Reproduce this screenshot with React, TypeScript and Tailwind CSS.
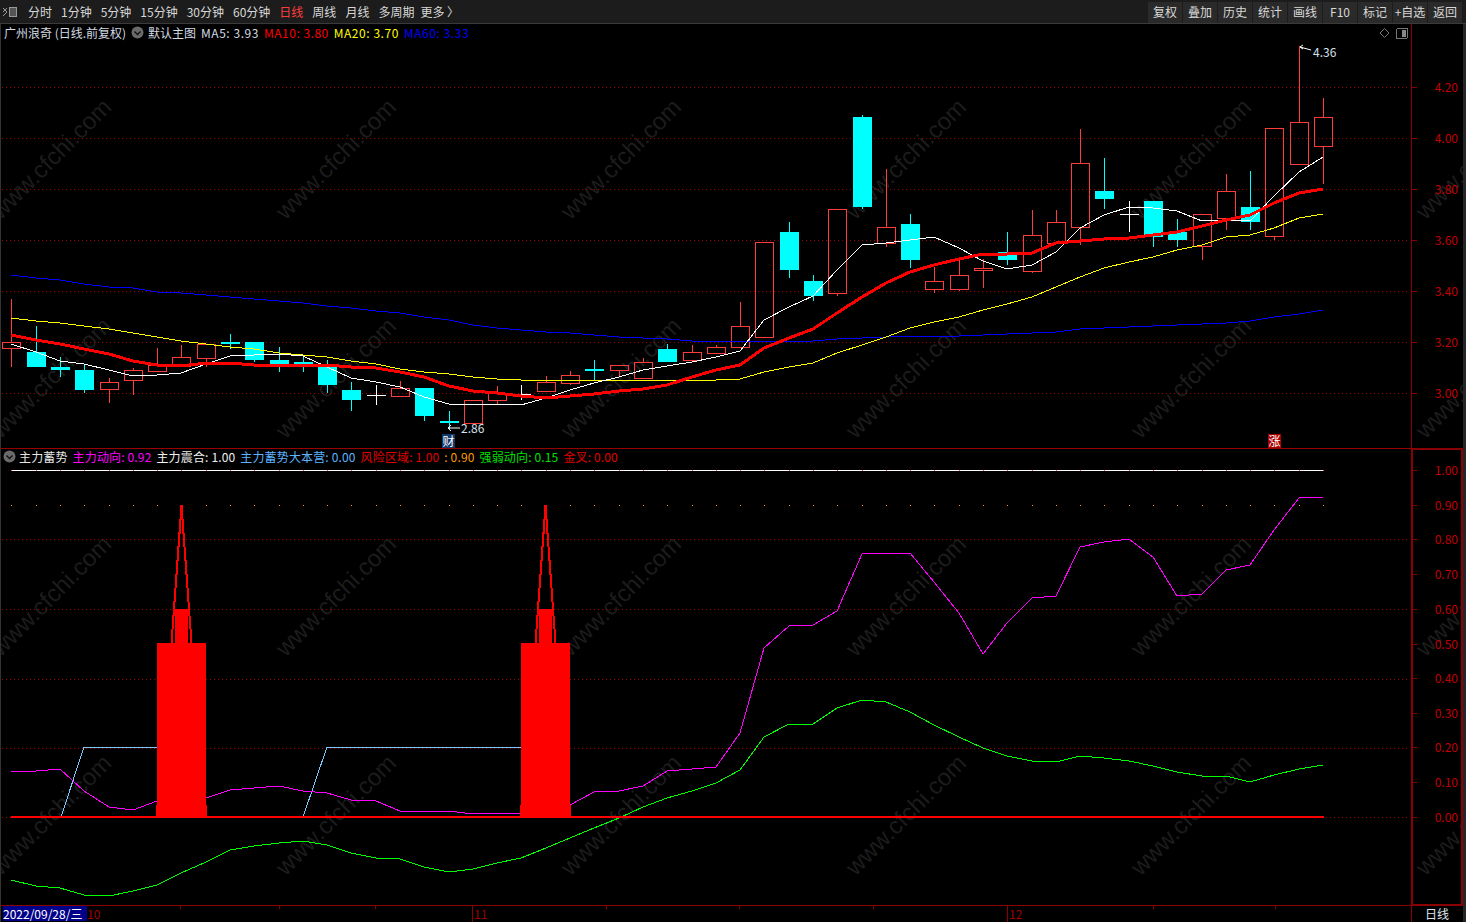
const X = (i: number) => Math.round(11.4 + 24.29 * i);
const pts = (ys: number[]) => ys.map((y, i) => `${X(i)},${y}`).join(' ');

// grid line as 1px dots every 4px, dash arrays get dropped unevenly once aliased
const dots = (y: number) => {
  let d = '';
  for (let x = 2; x < 1410; x += 4) d += `M${x} ${y}h1v1h-1z`;
  return d;
};

// hi, body top, body bottom, lo, kind (screen y, r = up, c = down, w = doji)
const candles: [number, number, number, number, string][] = [
  [299, 342, 348, 367, 'r'], [326, 352, 367, 367, 'c'], [357, 367, 370, 377, 'c'], [365, 370, 390, 393, 'c'],
  [378, 382, 389, 403, 'r'], [368, 370, 380, 395, 'r'], [348, 365, 371, 372, 'r'], [345, 357, 366, 366, 'r'],
  [344, 344, 358, 367, 'r'], [334, 342, 344, 349, 'c'], [342, 342, 360, 362, 'c'], [347, 360, 367, 372, 'c'],
  [357, 362, 367, 372, 'c'], [360, 367, 385, 393, 'c'], [382, 390, 400, 411, 'c'], [385, 395, 395, 405, 'w'],
  [381, 388, 396, 396, 'r'], [388, 388, 416, 421, 'c'], [411, 421, 423, 430, 'c'], [400, 400, 423, 423, 'r'],
  [386, 393, 400, 404, 'r'], [385, 394, 394, 400, 'w'], [376, 382, 391, 391, 'r'], [371, 375, 383, 385, 'r'],
  [360, 369, 371, 380, 'c'], [365, 365, 370, 377, 'r'], [358, 362, 378, 378, 'r'], [344, 349, 362, 362, 'c'],
  [345, 352, 360, 362, 'r'], [345, 347, 353, 353, 'r'], [302, 326, 347, 347, 'r'], [242, 242, 337, 337, 'r'],
  [222, 232, 270, 278, 'c'], [275, 281, 296, 301, 'c'], [209, 209, 293, 296, 'r'], [115, 117, 207, 209, 'c'],
  [169, 227, 243, 247, 'r'], [214, 224, 260, 268, 'c'], [267, 281, 289, 293, 'r'], [260, 275, 289, 291, 'r'],
  [259, 268, 270, 288, 'r'], [232, 252, 260, 265, 'c'], [210, 235, 271, 273, 'r'], [210, 222, 243, 243, 'r'],
  [129, 163, 227, 245, 'r'], [158, 191, 199, 209, 'c'], [201, 214, 214, 232, 'w'], [201, 201, 237, 247, 'c'],
  [219, 232, 240, 247, 'c'], [214, 214, 246, 260, 'r'], [174, 191, 218, 230, 'r'], [171, 207, 222, 230, 'c'],
  [128, 128, 236, 240, 'r'], [46, 122, 164, 164, 'r'], [98, 117, 146, 184, 'r'],
];

const ma5 = [344, 352, 361, 364, 370, 376, 375, 373, 364, 356, 355, 354, 356, 367, 378, 382, 387, 397, 404, 404, 404, 405, 398, 390, 383, 377, 370, 366, 362, 357, 351, 320, 307, 296, 270, 245, 243, 240, 237, 248, 261, 269, 265, 252, 228, 215, 207, 208, 211, 221, 220, 221, 196, 172, 157];
const ma10 = [335, 340, 344, 349, 354, 361, 365, 366, 363, 363, 365, 365, 365, 365, 367, 368, 372, 377, 386, 391, 393, 396, 398, 396, 394, 391, 389, 385, 377, 370, 365, 348, 338, 329, 313, 297, 283, 272, 265, 259, 254, 254, 253, 243, 241, 239, 238, 235, 232, 226, 220, 215, 203, 193, 189];
const ma20 = [318, 321, 323, 326, 329, 333, 337, 341, 344, 347, 349, 353, 355, 357, 361, 364, 369, 372, 374, 377, 379, 380, 381, 380, 380, 380, 380, 380, 380, 380, 379, 372, 367, 363, 353, 345, 337, 328, 322, 317, 310, 304, 297, 287, 277, 268, 262, 257, 250, 245, 237, 235, 228, 218, 214];
const ma60 = [275, 278, 280, 284, 287, 288, 292, 293, 295, 297, 299, 301, 303, 306, 308, 311, 313, 317, 320, 325, 328, 330, 332, 333, 335, 337, 338, 339, 341, 341, 341, 341, 341, 341, 339, 338, 337, 336, 336, 336, 335, 334, 333, 332, 329, 328, 327, 326, 325, 324, 323, 321, 317, 314, 310];

const force = [772, 771, 769, 791, 807, 810, 801, 800, 798, 790, 788, 786, 791, 793, 800, 801, 811, 811, 811, 814, 813, 813, 810, 805, 792, 791, 786, 771, 769, 767, 733, 648, 626, 625, 611, 554, 553, 553, 582, 613, 654, 623, 598, 596, 547, 542, 539, 557, 596, 594, 570, 565, 530, 498, 497];
const strength = [880, 886, 888, 895, 896, 891, 885, 873, 862, 850, 846, 843, 841, 845, 853, 858, 859, 867, 872, 869, 863, 858, 848, 838, 828, 818, 807, 798, 791, 783, 770, 737, 724, 724, 708, 700, 702, 712, 725, 737, 748, 756, 761, 762, 756, 758, 761, 766, 772, 776, 776, 782, 775, 769, 765];

const priceAxis = [['4.20', 87], ['4.00', 138], ['3.80', 189], ['3.60', 240], ['3.40', 291], ['3.20', 342], ['3.00', 393]] as const;
const indicatorAxis = [['1.00', 470], ['0.90', 505], ['0.80', 539], ['0.70', 574], ['0.60', 609], ['0.50', 644], ['0.40', 678], ['0.30', 713], ['0.20', 747], ['0.10', 782], ['0.00', 817]] as const;

const leftTabs = ['分时', '1分钟', '5分钟', '15分钟', '30分钟', '60分钟', '日线', '周线', '月线', '多周期'];
const rightTabs = ['复权', '叠加', '历史', '统计', '画线', 'F10', '标记', '+自选', '返回'];
const timeTicks = [180, 279, 375, 606, 739, 873, 1153, 1275];

function Candle({ c, i }: { c: (typeof candles)[number]; i: number }) {
  const [hi, top, bot, lo, kind] = c;
  const x = X(i);
  if (kind === 'c') {
    return (
      <g fill="#00ffff">
        <rect x={x} y={hi} width={1} height={lo - hi} />
        <rect x={x - 9} y={top} width={19} height={bot - top} />
      </g>
    );
  }
  if (kind === 'w') {
    return (
      <g fill="#ffffff">
        <rect x={x} y={hi} width={1} height={lo - hi} />
        <rect x={x - 9} y={top} width={19} height={1} />
      </g>
    );
  }
  return (
    <g>
      <rect x={x} y={hi} width={1} height={top - hi} fill="#ff3c3c" />
      <rect x={x} y={bot} width={1} height={lo - bot} fill="#ff3c3c" />
      <rect x={x - 8.5} y={top + 0.5} width={18} height={bot - top} fill="none" stroke="#ff3c3c" strokeWidth={1} />
    </g>
  );
}

function CircleChevron() {
  return (
    <svg width="13" height="13" viewBox="0 0 13 13" className="shrink-0">
      <circle cx="6.5" cy="6.5" r="6" fill="#6a6a6a" />
      <path d="M3.5 5.5 6.5 8.5 9.5 5.5" fill="none" stroke="#111" strokeWidth="1.4" />
    </svg>
  );
}

function AxisLabels({ items }: { items: readonly (readonly [string, number])[] }) {
  return (
    <>
      {items.map(([label, y]) => (
        <g key={label}>
          <rect x={1412} y={y} width={5} height={1} fill="#8b0000" />
          <text x={1458} y={y + 4.5} textAnchor="end" fill="#c00000" className="text-[12px]">
            {label}
          </text>
        </g>
      ))}
    </>
  );
}

function PricePanel() {
  return (
    <div className="relative h-[424px] shrink-0">
      <svg className="absolute inset-0" width="1466" height="424" viewBox="0 24 1466 424" shapeRendering="crispEdges">
        {priceAxis.map(([label, y]) => (
          <path key={label} d={dots(y)} fill="#a00000" />
        ))}
        {candles.map((c, i) => (
          <Candle key={i} c={c} i={i} />
        ))}
        <polyline points={pts(ma60)} fill="none" stroke="#0000ff" strokeWidth={1} />
        <polyline points={pts(ma20)} fill="none" stroke="#ffff00" strokeWidth={1} />
        <polyline points={pts(ma5)} fill="none" stroke="#ffffff" strokeWidth={1} />
        <polyline points={pts(ma10)} fill="none" stroke="#ff0000" strokeWidth={3} />
        <rect x={1411} y={24} width={1} height={424} fill="#8b0000" />
        <AxisLabels items={priceAxis} />
        {/* high / low markers */}
        <path d="M1303 45 1300 47 1303 49M1300 47 1311 50" fill="none" stroke="#fff" shapeRendering="auto" />
        <path d="M451 425 448 428 451 431M448 428H460" fill="none" stroke="#fff" shapeRendering="auto" />
        <text x={1313} y={57} fill="#d6e2ee" className="text-[12px]" shapeRendering="auto">4.36</text>
        <text x={461} y={433} fill="#d6e2ee" className="text-[12px]" shapeRendering="auto">2.86</text>
        <path d="M1384.5 28.5 1389 33 1384.5 37.5 1380 33Z" fill="none" stroke="#777" shapeRendering="auto" />
        <rect x={1396.5} y={28.5} width={11} height={10} rx={1.5} fill="none" stroke="#777" />
        <rect x={1402} y={30} width={4} height={7} fill="#888" />
      </svg>

      <div className="relative flex items-center gap-[5px] pl-[4px] h-[17px] text-[12px] leading-none text-[#d2dae2] whitespace-nowrap">
        <span className="w-[122px]">广州浪奇 (日线.前复权)</span>
        <CircleChevron />
        <span className="ml-[-1px]">默认主图</span>
        <span className="tracking-[0.55px]">MA5: 3.93</span>
        <span className="tracking-[0.5px] text-[#ff0000]">MA10: 3.80</span>
        <span className="tracking-[0.55px] text-[#ffff00]">MA20: 3.70</span>
        <span className="tracking-[0.55px] text-[#0000ff]">MA60: 3.33</span>
      </div>

      <div className="absolute left-[442px] top-[410px] w-[13px] h-[14px] bg-[#12386a] text-white text-[12px] leading-[14px] text-center">财</div>
      <div className="absolute left-[1268px] top-[410px] w-[13px] h-[14px] bg-[#a80000] text-white text-[12px] leading-[14px] text-center">涨</div>
    </div>
  );
}

function Spike({ left }: { left: number }) {
  const cx = left + 24.5;
  return (
    <g fill="#ff0000">
      <polygon points={`${cx - 1},505 ${cx + 1},505 ${cx + 11},643 ${cx + 9},643 ${cx},520 ${cx - 9},643 ${cx - 11},643`} />
      <rect x={left + 18} y={609} width={13} height={34} />
      <rect x={left} y={643} width={49} height={174} />
      <rect x={left - 1} y={805} width={51} height={12} />
    </g>
  );
}

function IndicatorPanel() {
  return (
    <div className="relative h-[457px] shrink-0">
      <svg className="absolute inset-0" width="1466" height="457" viewBox="0 448 1466 457" shapeRendering="crispEdges">
        {[539, 609, 679, 748, 817].map((y) => (
          <path key={y} d={dots(y)} fill="#a00000" />
        ))}
        <rect x={11} y={470} width={1313} height={1} fill="#ffffff" />
        {candles.map((_, i) => (
          <g key={i}>
            <rect x={X(i)} y={470} width={1} height={1} fill="#ff5050" />
            <rect x={X(i)} y={505} width={1} height={1} fill="#ff9a1e" />
          </g>
        ))}
        <polyline points={`${X(2) + 1},817 84,747 157,747`} fill="none" stroke="#7cc8ff" />
        <polyline points="303,817 327,747 521,747" fill="none" stroke="#7cc8ff" />
        <polyline points={pts(force)} fill="none" stroke="#ff00ff" />
        <polyline points={pts(strength)} fill="none" stroke="#00ff00" />
        <Spike left={157} />
        <Spike left={521} />
        <rect x={11} y={816} width={1313} height={2} fill="#ff0000" />
        <rect x={0} y={448} width={1463} height={1} fill="#990000" />
        <rect x={1411} y={448} width={52} height={2} fill="#8b0000" />
        <rect x={1411} y={449} width={2} height={456} fill="#8b0000" />
        <rect x={1461} y={449} width={2} height={456} fill="#8b0000" />
        <rect x={1411} y={904} width={52} height={1} fill="#8b0000" />
        <AxisLabels items={indicatorAxis} />
      </svg>

      <div className="relative flex items-center gap-[5px] pl-[3px] h-[17px] text-[12px] leading-none tracking-[0.15px] whitespace-nowrap">
        <CircleChevron />
        <span className="text-[#e6e6e6] ml-[-2px]">主力蓄势</span>
        <span className="text-[#ff00ff]">主力动向: 0.92</span>
        <span className="text-[#f0f0f0]">主力震合: 1.00</span>
        <span className="text-[#5db4ff]">主力蓄势大本营: 0.00</span>
        <span className="text-[#e00000]">
          风险区域: 1.00<span className="text-[#ff9a00] pl-[2px]"> : 0.90</span>
        </span>
        <span className="text-[#00e000]">强弱动向: 0.15</span>
        <span className="text-[#e00000]">金叉: 0.00</span>
      </div>
    </div>
  );
}

function TimeBar() {
  return (
    <div className="relative flex items-start h-[17px] border-t border-[#8b0000] text-[12px] leading-[15px] text-[#a00000]">
      <div className="ml-[3px] w-[84px] h-[15px] bg-[#000088] text-white whitespace-nowrap">2022/09/28/三</div>
      <span>10</span>
      {timeTicks.map((x) => (
        <span key={x} className="absolute top-0 w-px h-[3px] bg-[#8b0000]" style={{ left: x }} />
      ))}
      <span className="absolute left-[472px] top-0 h-[16px] border-l border-[#8b0000] pl-px">11</span>
      <span className="absolute left-[1007px] top-0 h-[16px] border-l border-[#8b0000] pl-px">12</span>
      <span className="absolute left-[1411px] top-0 h-[16px] w-[51px] border-l border-[#8b0000] text-center text-[#dfe6ee]">日线</span>
    </div>
  );
}

export default function App() {
  return (
    <div className="relative w-[1466px] h-[922px] overflow-hidden bg-black font-['Noto_Sans_CJK_SC','Liberation_Sans',sans-serif]">
      {/* watermark sits under everything */}
      <svg className="absolute inset-0" width="1466" height="922">
        {[159, 378, 596, 815].map((cy) =>
          [51, 336, 621, 906, 1191, 1476].map((cx) => (
            <text
              key={`${cx}-${cy}`}
              x={cx}
              y={cy + 8}
              textAnchor="middle"
              transform={`rotate(-45 ${cx} ${cy})`}
              fill="#1c1c1c"
              className="text-[24px] font-['Liberation_Sans',sans-serif]"
            >
              www.cfchi.com
            </text>
          )),
        )}
      </svg>

      <div className="relative flex flex-col h-full">
        {/* Toolbar */}
        <div className="flex items-center justify-between h-[24px] shrink-0 pt-px bg-[#1c1c1c] border-b border-[#3a3a3a] text-[12px] text-[#d8d8d8] whitespace-nowrap">
          <div className="flex items-center gap-[9px]">
            <svg width="16" height="12" viewBox="0 0 16 12" className="ml-[2px] mr-px shrink-0">
              <path d="M1 2 5 6 1 10M5 2 1 6" fill="none" stroke="#999" strokeWidth="1" />
              <rect x="7.5" y="1.5" width="7" height="9" fill="#555" stroke="#999" />
            </svg>
            {leftTabs.map((t) => (
              <span key={t} className={t === '日线' ? 'text-[#ff3c3c]' : ''}>
                {t}
              </span>
            ))}
            <span className="ml-[-3px]">更多 〉</span>
          </div>
          <div className="flex items-center gap-px pr-[4px] h-[21px]">
            {rightTabs.map((t) => (
              <span key={t} className="w-[34px] h-full flex items-center justify-center bg-[#2a2a2a]">
                {t}
              </span>
            ))}
          </div>
        </div>

        <PricePanel />
        <IndicatorPanel />
        <TimeBar />

        <div className="absolute right-0 top-[24px] bottom-0 w-[3px] bg-[#262626]" />
        <div className="absolute left-0 top-[24px] bottom-0 w-px bg-[#333]" />
      </div>
    </div>
  );
}
